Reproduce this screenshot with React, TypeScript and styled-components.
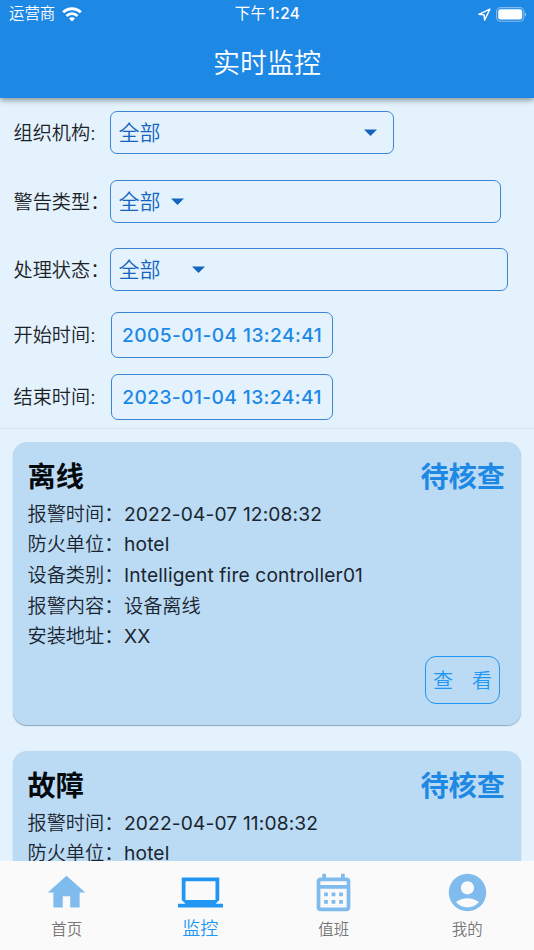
import React from "react";
import styled, { createGlobalStyle } from "styled-components";

const GlobalStyle = createGlobalStyle`
  *, *::before, *::after { box-sizing: border-box; }
  body {
    margin: 0;
    font-family: Inter, "Noto Sans CJK SC", sans-serif;
    -webkit-font-smoothing: antialiased;
  }
`;

const Screen = styled.div`
  display: flex;
  flex-direction: column;
  width: 534px;
  height: 950px;
  overflow: hidden;
  background: #e3f2fd;
`;

const Header = styled.header`
  flex: none;
  height: 98px;
  background: #1e88e5;
  color: #fff;
  box-shadow: 0 2px 6px rgba(0, 0, 0, 0.42);
  z-index: 1;
`;

const StatusBar = styled.div`
  display: grid;
  grid-template-columns: 1fr auto 1fr;
  align-items: center;
  height: 27px;
  padding: 0 8px 0 9px;
  font-size: 15.4px;
  line-height: 28px;
`;

const Carrier = styled.div`
  display: flex;
  align-items: center;
  gap: 7px;
  font-weight: 350;
`;

const Clock = styled.div`
  display: flex;
  gap: 2px;
  font-weight: 500;
  letter-spacing: 0.4px;
`;

const DayPart = styled.span`
  font-weight: 400;
`;

const Indicators = styled.div`
  display: flex;
  align-items: center;
  justify-content: flex-end;
  gap: 5px;
`;

const Title = styled.h1`
  margin: 0;
  height: 71px;
  font-size: 27px;
  font-weight: 350;
  line-height: 73px;
  text-align: center;
`;

const Filters = styled.section`
  flex: none;
  height: 331px;
  padding: 13px 0 0 13.5px;
  border-bottom: 1px solid #d5e4ef;
`;

const FilterRow = styled.div<{ $pitch: number; $indent: number }>`
  display: flex;
  align-items: flex-start;
  height: ${(p) => p.$pitch}px;

  & > :last-child {
    margin-left: ${(p) => p.$indent}px;
  }
`;

const Label = styled.span<{ $line: number }>`
  flex: none;
  width: 95px;
  font-size: 19.2px;
  font-weight: 350;
  line-height: ${(p) => p.$line}px;
  color: #1c2227;
  white-space: nowrap;
`;

const Select = styled.div<{ $width: number; $valueWidth: number }>`
  display: flex;
  align-items: center;
  width: ${(p) => p.$width}px;
  height: 43px;
  padding-left: 7.5px;
  border: 1px solid #3b86d4;
  border-radius: 7px;
  color: #1565c0;
  font-size: 21px;
  font-weight: 350;

  & > span {
    width: ${(p) => p.$valueWidth}px;
    line-height: 43px;
  }
`;

const DateButton = styled.div`
  width: 222px;
  height: 46px;
  border: 1px solid #3b86d4;
  border-radius: 7px;
  color: #1e88e5;
  font-size: 19.2px;
  font-weight: 500;
  line-height: 44px;
  letter-spacing: 0.4px;
  text-align: center;
  white-space: nowrap;
`;

const AlarmList = styled.main`
  flex: 1;
  min-height: 0;
  overflow: hidden;
  padding: 13px 13px 0;
  display: flex;
  flex-direction: column;
  gap: 26px;
`;

const Card = styled.article`
  flex: none;
  display: flex;
  flex-direction: column;
  height: 283px;
  padding: 13px 16px 0 14.5px;
  border-radius: 14px;
  background: #bbdbf4;
  box-shadow: 0 1px 1px rgba(50, 90, 125, 0.5);
`;

const CardHead = styled.div`
  display: flex;
  justify-content: space-between;
  height: 43.5px;
  font-size: 28.2px;
  font-weight: 700;
  line-height: 45px;
  color: #050a0e;
`;

const State = styled.span`
  color: #1e88e5;
`;

const Fact = styled.div`
  display: flex;
  height: 30.7px;
  font-size: 19.2px;
  line-height: 30.7px;
  color: #1a2530;
  white-space: nowrap;
`;

const FactName = styled.span`
  width: 96.5px;
  font-weight: 350;
`;

const FactValue = styled.span<{ $cjk: boolean }>`
  font-weight: ${(p) => (p.$cjk ? 350 : 400)};
  letter-spacing: ${(p) => (p.$cjk ? 0 : 0.14)}px;
`;

const ViewButton = styled.div`
  display: flex;
  justify-content: space-between;
  align-self: flex-end;
  width: 75px;
  height: 48px;
  margin: 4px 5px 0 0;
  padding: 0 7px;
  border: 1.5px solid #2196f3;
  border-radius: 11px;
  color: #2196f3;
  font-size: 20px;
  font-weight: 350;
  line-height: 49px;
`;

const TabBar = styled.nav`
  flex: none;
  display: grid;
  grid-template-columns: repeat(4, 1fr);
  height: 89px;
  padding-top: 9px;
  background: #fafafa;
`;

const Tab = styled.div<{ $active?: boolean }>`
  display: flex;
  flex-direction: column;
  align-items: center;
  color: ${(p) => (p.$active ? "#2196f3" : "#757575")};
  font-size: ${(p) => (p.$active ? 18 : 15.4)}px;
  font-weight: 350;
  line-height: ${(p) => (p.$active ? 27 : 30)}px;

  svg {
    display: block;
    flex: none;
    fill: ${(p) => (p.$active ? "#2196f3" : "#80bbee")};
  }
`;

const WifiIcon = () => (
  <svg width="20" height="15" viewBox="0 0 20 15" fill="none" stroke="#fff">
    <path d="M1.2 5.3a12.6 12.6 0 0 1 17.6 0" strokeWidth="2.9" />
    <path d="M4.5 9a7.7 7.7 0 0 1 11 0" strokeWidth="2.7" />
    <path d="M10 14.6 7 11.6a4.3 4.3 0 0 1 6 0z" fill="#fff" stroke="none" />
  </svg>
);

const LocationIcon = () => (
  <svg width="13" height="13" viewBox="0 0 13 13" fill="none" stroke="#fff" strokeWidth="1.4" strokeLinejoin="round">
    <path d="M11.9 1.1.9 6.3l5.2.5.5 5.3z" />
  </svg>
);

const BatteryIcon = () => (
  <svg width="30.5" height="15" viewBox="0 0 30.5 15">
    <rect x="0.6" y="0.6" width="27.3" height="13.6" rx="4" fill="none" stroke="#fff" strokeOpacity="0.45" strokeWidth="1.1" />
    <rect x="2.2" y="2.2" width="24" height="10.4" rx="2.4" fill="#fff" />
    <path d="M28.9 5.2c1.7.8 1.7 3.6 0 4.4z" fill="#fff" fillOpacity="0.5" />
  </svg>
);

const Caret = () => (
  <svg width="13" height="7" viewBox="0 0 13 7" fill="#1565c0">
    <path d="M0 0.4h13L6.5 6.9z" />
  </svg>
);

const tabs = [
  { name: "首页", path: "M10 20v-6h4v6h5v-8h3L12 3 2 12h3v8z" },
  { name: "监控", path: "M20 18l2-2V4H2v12l2 2H0v2h24v-2zM4 6h16v10H4z", active: true },
  {
    name: "值班",
    path: "M19 4h-1V2h-2v2H8V2H6v2H5c-1.11 0-1.99.9-1.99 2L3 20c0 1.1.89 2 2 2h14c1.1 0 2-.9 2-2V6c0-1.1-.9-2-2-2zm0 16H5V10h14v10zm0-12H5V6h14v2zM9 14H7v-2h2v2zm4 0h-2v-2h2v2zm4 0h-2v-2h2v2zm-8 4H7v-2h2v2zm4 0h-2v-2h2v2zm4 0h-2v-2h2v2z",
  },
  {
    name: "我的",
    path: "M12 2C6.48 2 2 6.48 2 12s4.48 10 10 10 10-4.48 10-10S17.52 2 12 2zm0 4c1.93 0 3.5 1.57 3.5 3.5S13.93 13 12 13s-3.5-1.57-3.5-3.5S10.07 6 12 6zm0 14c-2.03 0-4.43-.82-6.14-2.88C7.55 15.8 9.68 15 12 15s4.45.8 6.14 2.12C16.43 19.18 14.03 20 12 20z",
  },
];

const selects = [
  { label: "组织机构:", width: 284, valueWidth: 245.5 },
  { label: "警告类型：", width: 391, valueWidth: 52.5 },
  { label: "处理状态：", width: 398, valueWidth: 73.5 },
];

const dates = [
  { label: "开始时间:", value: "2005-01-04 13:24:41" },
  { label: "结束时间:", value: "2023-01-04 13:24:41" },
];

const alarms = [
  {
    kind: "离线",
    facts: [
      { name: "报警时间：", value: "2022-04-07 12:08:32" },
      { name: "防火单位：", value: "hotel" },
      { name: "设备类别：", value: "Intelligent fire controller01" },
      { name: "报警内容：", value: "设备离线", cjk: true },
      { name: "安装地址：", value: "XX" },
    ],
    viewable: true,
  },
  {
    kind: "故障",
    facts: [
      { name: "报警时间：", value: "2022-04-07 11:08:32" },
      { name: "防火单位：", value: "hotel" },
    ],
    viewable: false,
  },
];

export default function App() {
  return (
    <>
      <GlobalStyle />
      <Screen>
        <Header>
          <StatusBar>
            <Carrier>
              运营商
              <WifiIcon />
            </Carrier>
            <Clock>
              <DayPart>下午</DayPart>
              <span>1:24</span>
            </Clock>
            <Indicators>
              <LocationIcon />
              <BatteryIcon />
            </Indicators>
          </StatusBar>
          <Title>实时监控</Title>
        </Header>
        <Filters>
          {selects.map((s, i) => (
            <FilterRow key={s.label} $pitch={i === 2 ? 63.5 : 68.5} $indent={1.5}>
              <Label $line={45}>{s.label}</Label>
              <Select $width={s.width} $valueWidth={s.valueWidth}>
                <span>全部</span>
                <Caret />
              </Select>
            </FilterRow>
          ))}
          {dates.map((d) => (
            <FilterRow key={d.label} $pitch={62} $indent={2.5}>
              <Label $line={47}>{d.label}</Label>
              <DateButton>{d.value}</DateButton>
            </FilterRow>
          ))}
        </Filters>
        <AlarmList>
          {alarms.map((a) => (
            <Card key={a.kind}>
              <CardHead>
                <span>{a.kind}</span>
                <State>待核查</State>
              </CardHead>
              {a.facts.map((f) => (
                <Fact key={f.name}>
                  <FactName>{f.name}</FactName>
                  <FactValue $cjk={Boolean(f.cjk)}>{f.value}</FactValue>
                </Fact>
              ))}
              {a.viewable && (
                <ViewButton>
                  <span>查</span>
                  <span>看</span>
                </ViewButton>
              )}
            </Card>
          ))}
        </AlarmList>
        <TabBar>
          {tabs.map((t) => (
            <Tab key={t.name} $active={t.active}>
              <svg width="45" height="45" viewBox="0 0 24 24">
                <path fillRule="evenodd" d={t.path} />
              </svg>
              {t.name}
            </Tab>
          ))}
        </TabBar>
      </Screen>
    </>
  );
}
